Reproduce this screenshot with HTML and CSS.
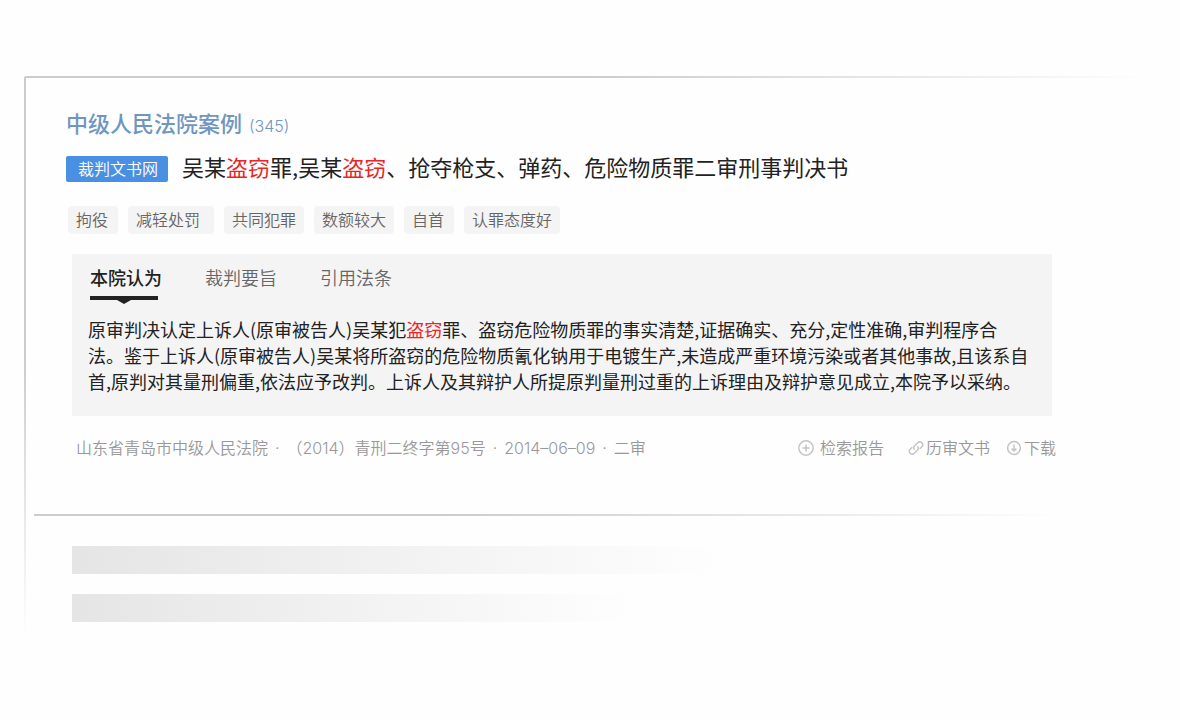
FILE: index.html
```html
<!DOCTYPE html>
<html lang="zh-CN">
<head>
  <meta charset="UTF-8" />
  <meta name="viewport" content="width=device-width, initial-scale=1.0" />
  <title>中级人民法院案例</title>
  <link rel="stylesheet" href="styles.css">
</head>
<body>
  <main class="card">
    <article class="case">
      <h2 class="court">中级人民法院案例 <span class="count">(345)</span></h2>

      <div class="title-row">
        <span class="badge">裁判文书网</span>
        <h3 class="title">吴某<em>盗窃</em>罪,吴某<em>盗窃</em>、抢夺枪支、弹药、危险物质罪二审刑事判决书</h3>
      </div>

      <ul class="tags">
        <li>拘役</li>
        <li class="wide">减轻处罚</li>
        <li>共同犯罪</li>
        <li>数额较大</li>
        <li>自首</li>
        <li>认罪态度好</li>
      </ul>

      <section class="panel">
        <div class="tabs">
          <button type="button" class="tab active">本院认为</button>
          <button type="button" class="tab">裁判要旨</button>
          <button type="button" class="tab">引用法条</button>
        </div>
        <p class="opinion">原审判决认定上诉人(原审被告人)吴某犯<em>盗窃</em>罪、盗窃危险物质罪的事实清楚,证据确实、充分,定性准确,审判程序合法。鉴于上诉人(原审被告人)吴某将所盗窃的危险物质氰化钠用于电镀生产,未造成严重环境污染或者其他事故,且该系自首,原判对其量刑偏重,依法应予改判。上诉人及其辩护人所提原判量刑过重的上诉理由及辩护意见成立,本院予以采纳。</p>
      </section>

      <footer class="case-footer">
        <div class="meta">
          <span>山东省青岛市中级人民法院</span>
          <span>·</span>
          <span>（2014）青刑二终字第95号</span>
          <span>·</span>
          <span>2014–06–09</span>
          <span>·</span>
          <span>二审</span>
        </div>
        <div class="actions">
          <a href="#" class="report">
            <svg width="16" height="16" viewBox="0 0 16 16"><circle cx="8" cy="8" r="7.2" /><path d="M8 4.5v7M4.5 8h7" /></svg>
            检索报告
          </a>
          <a href="#">
            <svg width="16" height="16" viewBox="0 0 16 16"><path d="M6.6 9.8a3 3 0 0 1 .1-4.1l3-3a2.9 2.9 0 0 1 4.1 4.1l-2 2M9.4 6.2a3 3 0 0 1-.1 4.1l-3 3a2.9 2.9 0 0 1-4.1-4.1l2-2" /></svg>
            历审文书
          </a>
          <a href="#">
            <svg width="16" height="16" viewBox="0 0 16 16"><circle cx="8" cy="8" r="6.4" /><path d="M8 4.5v6.3M5.6 8.6L8 11l2.4-2.4" /></svg>
            下载
          </a>
        </div>
      </footer>
    </article>

    <hr class="divider">

    <div class="skeleton"></div>
    <div class="skeleton short"></div>
  </main>
</body>
</html>
```
FILE: styles.css
```css
* {
  box-sizing: border-box;
}
body {
  margin: 0;
  padding: 76px 32px 80px 24px;
  background: #fefefe;
  color: #222;
  font-family: "Noto Sans CJK SC", sans-serif;
}
h2, h3, p, ul {
  margin: 0;
  padding: 0;
  font-weight: normal;
}
em {
  font-style: normal;
  color: #e8262a;
}
/* frame fades out to the right and to the bottom */
.card {
  padding-top: 30px;
  padding-bottom: 18px;
  background:
    linear-gradient(to right, #ccc 50%, transparent) top left / 100% 2px no-repeat,
    linear-gradient(to bottom, #ccc 50%, transparent) top left / 2px 100% no-repeat;
  border-top-left-radius: 2px;
}
.case {
  padding: 0 92px 0 42px;
}
.court {
  font-size: 22px;
  font-weight: 500;
  line-height: 32px;
  color: #6f96c1;
}
.count {
  margin-left: 2px;
  font-family: Inter, "Noto Sans CJK SC", sans-serif;
  font-size: 16px;
  font-weight: 300;
  line-height: 1;
}
.title-row {
  display: flex;
  align-items: center;
  gap: 14px;
  margin-top: 15px;
}
.badge {
  padding: 0 10px 2px 12px;
  border-radius: 2px;
  background: #4a90e2;
  color: #fff;
  font-size: 16px;
  font-weight: 350;
  line-height: 24px;
}
.title {
  padding-bottom: 6px;
  font-size: 22px;
  line-height: 26px;
}
.tags {
  display: flex;
  gap: 10px;
  margin: 21px 2px 0;
  list-style: none;
}
.tags li {
  min-width: 50px;
  padding: 0 8px 2px;
  border-radius: 4px;
  background: #f4f4f4;
  color: #666;
  font-size: 16px;
  font-weight: 350;
  line-height: 26px;
}
.tags .wide {
  padding-right: 14px;
}
.panel {
  margin: 20px 4px 0 6px;
  padding: 8px 20px 22px 16px;
  background: #f4f4f4;
}
.tabs {
  display: flex;
  gap: 43px;
  padding-left: 2px;
}
.tab {
  position: relative;
  height: 38px;
  padding: 0 0 8px;
  border: none;
  background: none;
  color: #666;
  font: 350 18px "Noto Sans CJK SC", sans-serif;
  cursor: pointer;
}
.tab.active {
  color: #222;
  font-weight: 500;
}
.tab.active::before {
  content: "";
  position: absolute;
  left: 0;
  bottom: 0;
  width: 68px;
  height: 4px;
  background: #222;
}
.tab.active::after {
  content: "";
  position: absolute;
  left: 27px;
  top: 100%;
  border: 7px solid transparent;
  border-top: 4px solid #222;
  border-bottom: 0;
}
.opinion {
  margin-top: 16px;
  font-size: 18px;
  line-height: 26px;
}
.case-footer {
  display: flex;
  justify-content: space-between;
  margin-top: 20px;
  padding-left: 10px;
  color: #999;
  font-family: Inter, "Noto Sans CJK SC", sans-serif;
  font-size: 16px;
  font-weight: 350;
  line-height: 24px;
}
.meta {
  display: flex;
  gap: 7px;
}
.actions {
  display: flex;
  gap: 16px;
}
.actions a {
  display: flex;
  align-items: center;
  gap: 2px;
  color: #999;
  text-decoration: none;
}
.actions .report {
  gap: 6px;
  margin-right: 8px;
}
.actions svg {
  fill: none;
  stroke: #c4c4c4;
  stroke-width: 1.5;
}
.divider {
  height: 2px;
  margin: 54px 84px 0 10px;
  border: none;
  background: linear-gradient(to right, #ccc 40%, transparent);
}
.skeleton {
  width: 650px;
  height: 28px;
  margin: 30px 0 0 48px;
  background: linear-gradient(to right, #e5e5e5, transparent);
}
.skeleton.short {
  width: 560px;
  margin-top: 20px;
}
```
